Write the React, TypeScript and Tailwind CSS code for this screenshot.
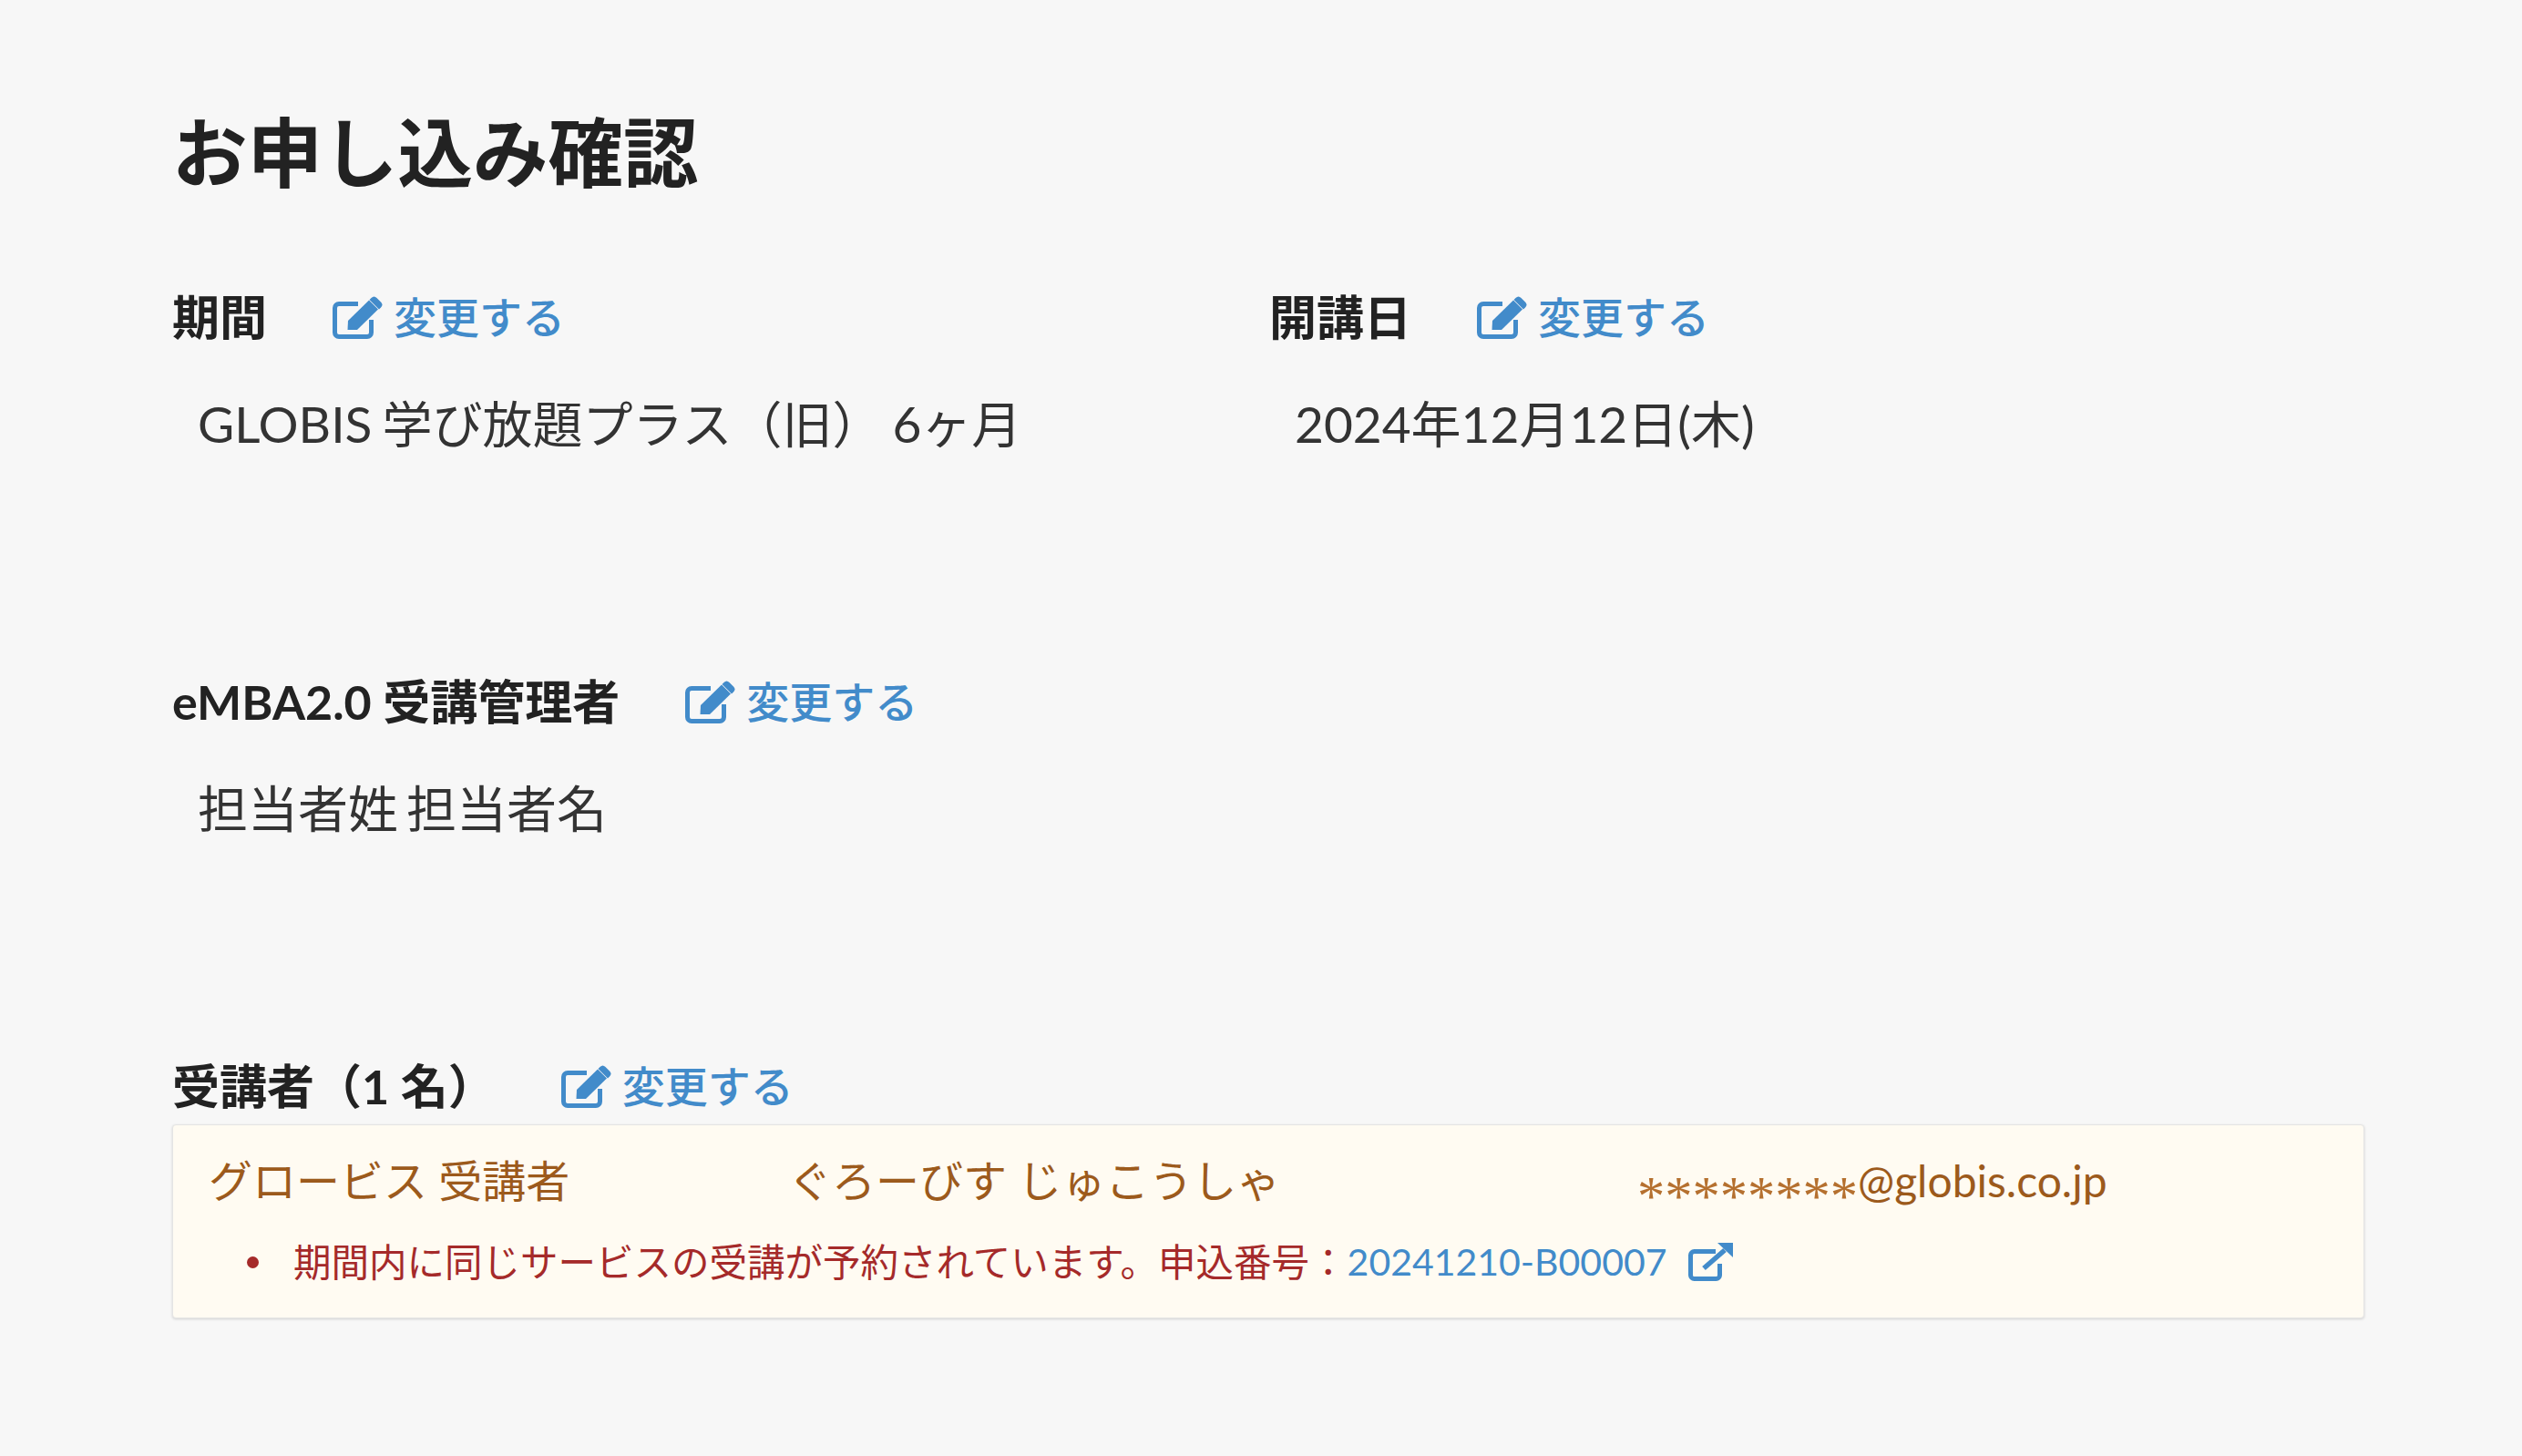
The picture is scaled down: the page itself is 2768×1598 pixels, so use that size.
const FONT = "font-['Lato','Noto_Sans_CJK_JP',sans-serif]";

function EditIcon() {
  return (
    <svg viewBox="0 0 55 48" className="w-[55px] h-[48px] shrink-0" fill="none">
      <path d="M42.5 27v14a4.5 4.5 0 0 1-4.5 4.5H7A4.5 4.5 0 0 1 2.500 41V14A4.5 4.5 0 0 1 7 9.500h21" stroke="#428bca" strokeWidth="5" />
      <path d="M16.500 38 17 28 40 5.500l10 10L27 38z" fill="#428bca" />
      <path d="M42.500 3q3-3 6 0l4.500 4.500q3 3 0 6l-2 2-10.500-10.500z" fill="#428bca" />
    </svg>
  );
}

function ExternalIcon() {
  return (
    <svg viewBox="0 0 49 42" className="w-[49px] h-[42px] shrink-0" fill="none">
      <path d="M34.500 23v12.500a4 4 0 0 1-4 4H6.500a4 4 0 0 1-4-4V13.500a4 4 0 0 1 4-4H30" stroke="#428bca" strokeWidth="5" />
      <path d="M17 28 40 8" stroke="#428bca" strokeWidth="5.500" />
      <path d="M32 0h17v16z" fill="#428bca" />
    </svg>
  );
}

function SectionLabel({ label }: { label: string }) {
  return (
    <div className="flex items-center h-[60px]">
      <span className="text-[52px] font-bold text-[#222222] mr-[72px]">{label}</span>
      <a className="flex items-center gap-[12px] text-[47px] font-medium text-[#428bca]">
        <EditIcon />
        変更する
      </a>
    </div>
  );
}

export default function App() {
  return (
    <main className={`${FONT} min-h-screen bg-[#f7f7f7] pl-[189px] pr-[173px] pt-[118px]`}>
      <h1 className="text-[82.5px] leading-[100px] font-bold text-[#222222] mb-[100px]">お申し込み確認</h1>

      <div className="grid grid-cols-[1204px_1fr]">
        <div>
          <SectionLabel label="期間" />
          <p className="pl-[28px] mt-[57px] text-[55px] leading-[60px] text-[#333333] [word-spacing:-3px]">GLOBIS 学び放題プラス（旧） 6ヶ月</p>
        </div>
        <div>
          <SectionLabel label="開講日" />
          <p className="pl-[28px] mt-[57px] text-[55px] leading-[60px] text-[#333333]">2024年12月12日(木)</p>
        </div>
      </div>

      <div className="mt-[245px]">
        <SectionLabel label="eMBA2.0 受講管理者" />
        <p className="pl-[28px] mt-[57px] text-[55px] leading-[60px] text-[#333333] [word-spacing:-5px]">担当者姓 担当者名</p>
      </div>

      <div className="mt-[245px]">
        <SectionLabel label="受講者（1 名）" />
        <div className="mt-[12px] h-[213px] bg-[#fffbf2] border border-[#e4e4e4] rounded-[4px] shadow-[0_1px_3px_rgba(0,0,0,0.15)] pl-[39px] pt-[31px]">
          <div className="flex items-center h-[60px] text-[48px] text-[#9c5a1c]">
            <span className="w-[636px]">グロービス 受講者</span>
            <span className="w-[932px]">ぐろーびす じゅこうしゃ</span>
            <span>
              <span className="inline-block translate-y-[19px] text-[#b5702f] text-[60.5px] leading-[1] font-['Liberation_Serif',serif]">********</span>@globis.co.jp
            </span>
          </div>
          {/* warning list */}
          <ul className="mt-[29px] pl-[42px] list-none text-[41.5px] leading-[60px] text-[#a52a2a]">
            <li className="flex items-center">
              <span className="w-[13px] h-[13px] rounded-full bg-[#a52a2a] mr-[38px] shrink-0" />
              期間内に同じサービスの受講が予約されています。申込番号：
              <a className="text-[41px] text-[#428bca] mr-[23px]">20241210-B00007</a>
              <ExternalIcon />
            </li>
          </ul>
        </div>
      </div>
    </main>
  );
}
